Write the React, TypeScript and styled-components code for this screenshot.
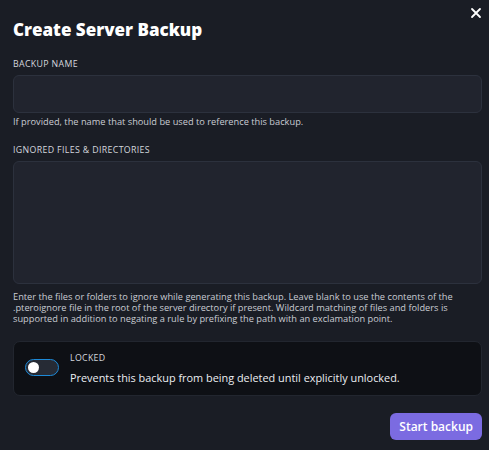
import React from 'react';
import styled, { createGlobalStyle } from 'styled-components';

const GlobalStyle = createGlobalStyle`
  html, body { margin: 0; padding: 0; background: #1a1d25; }
  body { font-family: "Open Sans", "Liberation Sans", sans-serif; }
  * { box-sizing: border-box; }
`;

const Modal = styled.div`
  position: relative;
  width: 489px;
  height: 450px;
  background: #1a1d25;
  padding: 17px 7px 10px 13px;
  color: #e5e7eb;
`;

const Close = styled.button`
  position: absolute;
  top: 7px;
  right: 7px;
  width: 12px;
  height: 12px;
  padding: 0;
  border: 0;
  background: none;
  cursor: pointer;
  display: flex;
`;

const Title = styled.h2`
  margin: 0 0 15px 0;
  font-size: 17px;
  font-weight: 800;
  color: #ffffff;
  line-height: 26px;
`;

const Field = styled.div`
  display: flex;
  flex-direction: column;
  margin-bottom: 17px;
`;

const Label = styled.label`
  font-size: 8.8px;
  text-transform: uppercase;
  color: #d4d7dd;
  letter-spacing: 0.35px;
  margin-bottom: 5px;
  line-height: 12px;
`;

const Input = styled.input`
  height: 38px;
  width: 100%;
  background: #21242e;
  border: 1px solid #2c313d;
  border-radius: 6px;
  outline: none;
  color: #fff;
`;

const TextArea = styled.textarea`
  display: block;
  height: 123px;
  width: 100%;
  background: #21242e;
  border: 1px solid #2c313d;
  border-radius: 6px;
  outline: none;
  resize: none;
  color: #fff;
`;

const Help = styled.p<{ $gap?: number }>`
  margin: ${(p) => p.$gap ?? 3}px 0 0 0;
  font-size: 9.25px;
  line-height: 11px;
  color: #c9ccd3;
`;

const LockBox = styled.div`
  display: flex;
  align-items: flex-start;
  gap: 11px;
  margin-top: 16px;
  padding: 10px 12px 10px 11px;
  background: #0e1015;
  border: 1px solid #22262f;
  border-radius: 7px;
`;

const Toggle = styled.span`
  position: relative;
  flex: none;
  width: 34px;
  height: 17px;
  margin-top: 7px;
  border-radius: 9px;
  background: #262b35;
  border: 1.5px solid #1d8ad8;
`;

const Knob = styled.span`
  position: absolute;
  left: 2px;
  top: 1.5px;
  width: 11px;
  height: 11px;
  border-radius: 50%;
  background: #ffffff;
`;

const LockText = styled.div`
  display: flex;
  flex-direction: column;
  gap: 7px;
`;

const LockLabel = styled.span`
  font-size: 8.8px;
  text-transform: uppercase;
  letter-spacing: 0.3px;
  color: #d4d7dd;
  line-height: 12px;
`;

const LockDesc = styled.span`
  font-size: 10.9px;
  color: #eceef2;
  line-height: 14px;
`;

const Footer = styled.div`
  display: flex;
  justify-content: flex-end;
  margin-top: 17px;
`;

const Button = styled.button`
  height: 27px;
  padding: 0 9px;
  border: 0;
  border-radius: 6px;
  background: #7b6be1;
  color: #ffffff;
  font-family: inherit;
  font-size: 12px;
  font-weight: 600;
  cursor: pointer;
`;

export default function App() {
  return (
    <>
      <GlobalStyle />
      <Modal>
        <Close aria-label="Close">
          <svg width="12" height="12" viewBox="0 0 12 12" fill="none" stroke="#fff" strokeWidth="1.8" strokeLinecap="round">
            <path d="M2 2l8 8M10 2l-8 8" />
          </svg>
        </Close>
        <Title>Create Server Backup</Title>

        <Field>
          <Label>Backup name</Label>
          <Input />
          <Help>If provided, the name that should be used to reference this backup.</Help>
        </Field>

        <Field>
          <Label>Ignored Files &amp; Directories</Label>
          <TextArea />
          <Help $gap={7}>
            Enter the files or folders to ignore while generating this backup. Leave blank to use the contents of the
            .pteroignore file in the root of the server directory if present. Wildcard matching of files and folders is
            supported in addition to negating a rule by prefixing the path with an exclamation point.
          </Help>
        </Field>

        <LockBox>
          <Toggle>
            <Knob />
          </Toggle>
          <LockText>
            <LockLabel>Locked</LockLabel>
            <LockDesc>Prevents this backup from being deleted until explicitly unlocked.</LockDesc>
          </LockText>
        </LockBox>

        <Footer>
          <Button>Start backup</Button>
        </Footer>
      </Modal>
    </>
  );
}
